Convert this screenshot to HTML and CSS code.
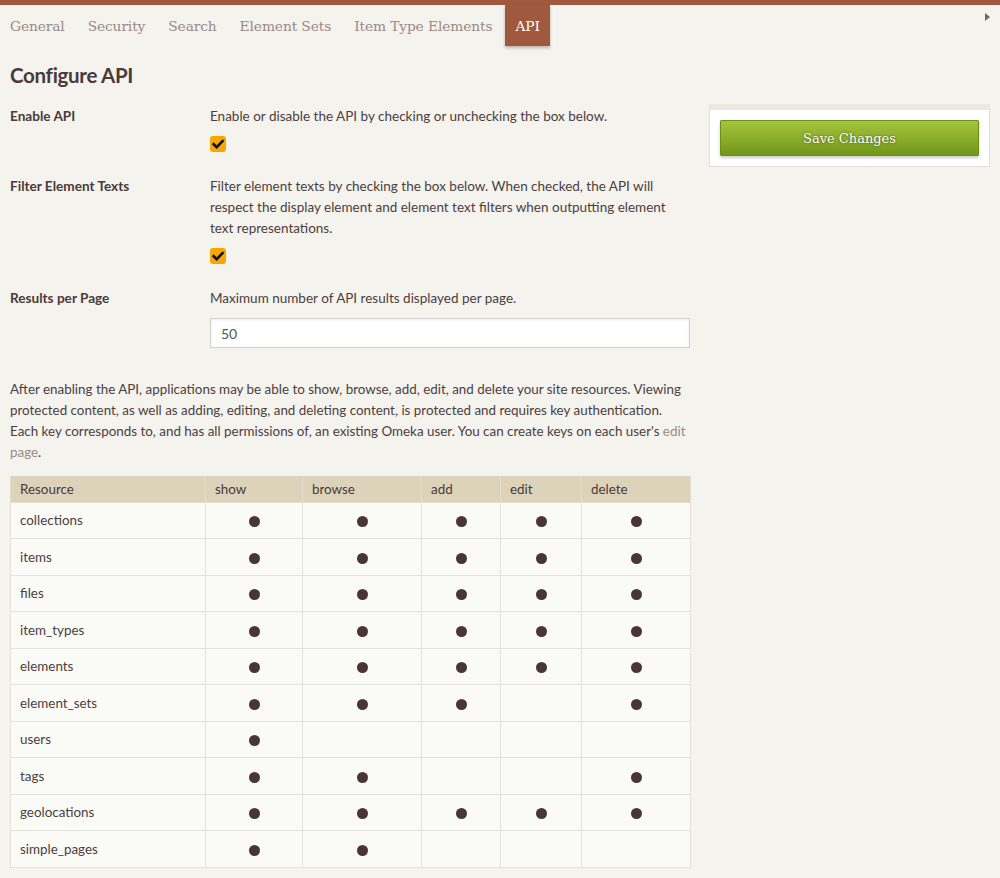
FILE: index.html
```html
<!DOCTYPE html>
<html lang="en">
<head>
<meta charset="utf-8">
<title>Configure API</title>
<link rel="stylesheet" href="styles.css">
</head>
<body>
<div class="topbar"></div>
<nav class="tabs">
  <a class="tab" href="#">General</a>
  <a class="tab" href="#">Security</a>
  <a class="tab" href="#">Search</a>
  <a class="tab" href="#">Element Sets</a>
  <a class="tab" href="#">Item Type Elements</a>
  <a class="tab active" href="#">API</a>
  <span class="more-arrow"></span>
</nav>
<div class="layout">
  <main class="main">
    <h1 class="title">Configure API</h1>
    <div class="field">
      <div class="label">Enable API</div>
      <div class="inputs">
        <p class="explanation">Enable or disable the API by checking or unchecking the box below.</p>
        <span class="checkbox"><svg width="16" height="16" viewBox="0 0 16 16"><rect x="0" y="0" width="16" height="16" rx="3" fill="#f5a800"/><path d="M3.6 8.2 L6.6 11.2 L12.6 5" fill="none" stroke="#111" stroke-width="2.6" stroke-linecap="square"/></svg></span>
      </div>
    </div>
    <div class="field">
      <div class="label">Filter Element Texts</div>
      <div class="inputs">
        <p class="explanation">Filter element texts by checking the box below. When checked, the API will respect the display element and element text filters when outputting element text representations.</p>
        <span class="checkbox"><svg width="16" height="16" viewBox="0 0 16 16"><rect x="0" y="0" width="16" height="16" rx="3" fill="#f5a800"/><path d="M3.6 8.2 L6.6 11.2 L12.6 5" fill="none" stroke="#111" stroke-width="2.6" stroke-linecap="square"/></svg></span>
      </div>
    </div>
    <div class="field">
      <div class="label">Results per Page</div>
      <div class="inputs">
        <p class="explanation">Maximum number of API results displayed per page.</p>
        <input class="textinput" type="text" value="50">
      </div>
    </div>
    <p class="intro">After enabling the API, applications may be able to show, browse, add, edit, and delete your site resources. Viewing protected content, as well as adding, editing, and deleting content, is protected and requires key authentication. Each key corresponds to, and has all permissions of, an existing Omeka user. You can create keys on each user's <a class="link" href="#">edit page</a>.</p>
    <table class="resources">
      <colgroup>
        <col class="c-res"><col class="c-show"><col class="c-browse"><col class="c-add"><col class="c-edit"><col class="c-delete">
      </colgroup>
      <thead>
        <tr><th>Resource</th><th>show</th><th>browse</th><th>add</th><th>edit</th><th>delete</th></tr>
      </thead>
      <tbody>
        <tr><td>collections</td><td class="d"><span class="dot"></span></td><td class="d"><span class="dot"></span></td><td class="d"><span class="dot"></span></td><td class="d"><span class="dot"></span></td><td class="d"><span class="dot"></span></td></tr>
        <tr><td>items</td><td class="d"><span class="dot"></span></td><td class="d"><span class="dot"></span></td><td class="d"><span class="dot"></span></td><td class="d"><span class="dot"></span></td><td class="d"><span class="dot"></span></td></tr>
        <tr><td>files</td><td class="d"><span class="dot"></span></td><td class="d"><span class="dot"></span></td><td class="d"><span class="dot"></span></td><td class="d"><span class="dot"></span></td><td class="d"><span class="dot"></span></td></tr>
        <tr><td>item_types</td><td class="d"><span class="dot"></span></td><td class="d"><span class="dot"></span></td><td class="d"><span class="dot"></span></td><td class="d"><span class="dot"></span></td><td class="d"><span class="dot"></span></td></tr>
        <tr><td>elements</td><td class="d"><span class="dot"></span></td><td class="d"><span class="dot"></span></td><td class="d"><span class="dot"></span></td><td class="d"><span class="dot"></span></td><td class="d"><span class="dot"></span></td></tr>
        <tr><td>element_sets</td><td class="d"><span class="dot"></span></td><td class="d"><span class="dot"></span></td><td class="d"><span class="dot"></span></td><td class="d"></td><td class="d"><span class="dot"></span></td></tr>
        <tr><td>users</td><td class="d"><span class="dot"></span></td><td class="d"></td><td class="d"></td><td class="d"></td><td class="d"></td></tr>
        <tr><td>tags</td><td class="d"><span class="dot"></span></td><td class="d"><span class="dot"></span></td><td class="d"></td><td class="d"></td><td class="d"><span class="dot"></span></td></tr>
        <tr><td>geolocations</td><td class="d"><span class="dot"></span></td><td class="d"><span class="dot"></span></td><td class="d"><span class="dot"></span></td><td class="d"><span class="dot"></span></td><td class="d"><span class="dot"></span></td></tr>
        <tr><td>simple_pages</td><td class="d"><span class="dot"></span></td><td class="d"><span class="dot"></span></td><td class="d"></td><td class="d"></td><td class="d"></td></tr>
      </tbody>
    </table>
  </main>
  <aside class="sidebar">
    <div class="panel">
      <button class="save" type="button">Save Changes</button>
    </div>
  </aside>
</div>
</body>
</html>
```

FILE: styles.css
```css
* { box-sizing: border-box; }

html, body {
  margin: 0;
  padding: 0;
}

body {
  background: #f4f3ee;
  color: #4c3e3e;
  font-family: "Lato", "Open Sans", sans-serif;
  font-size: 13.4px;
  line-height: 21px;
  width: 1000px;
  height: 878px;
  overflow: hidden;
}

.topbar {
  height: 5px;
  background: #a0593f;
}

.tabs {
  display: flex;
  align-items: stretch;
  height: 41px;
  padding-left: 0;
  gap: 3px;
  position: relative;
}

.tab {
  display: flex;
  align-items: center;
  padding: 1px 10px 0;
  font-family: "DejaVu Serif", "Liberation Serif", serif;
  font-size: 13.8px;
  color: #9b8987;
  text-decoration: none;
  letter-spacing: -0.12px;
}

.tab.active {
  background: #a0593f;
  color: #ffffff;
  box-shadow: 0 2px 3px rgba(0, 0, 0, 0.25);
}

.more-arrow {
  position: absolute;
  right: 10px;
  top: 8px;
  width: 0;
  height: 0;
  border-top: 4px solid transparent;
  border-bottom: 4px solid transparent;
  border-left: 5px solid #6a6a6a;
}

.layout {
  display: flex;
  align-items: flex-start;
}

.main {
  width: 680px;
  margin-left: 10px;
}

.title {
  margin: 17px 0 0;
  font-size: 20.5px;
  line-height: 24px;
  font-weight: 700;
  color: #4a3a3a;
  letter-spacing: -0.3px;
}

.field {
  display: grid;
  grid-template-columns: 200px 480px;
  margin-top: 19px;
}

.field + .field {
  margin-top: 24px;
}

.label {
  font-weight: 700;
  font-size: 13.6px;
  color: #4a3a3a;
}

.inputs {
  display: flex;
  flex-direction: column;
  align-items: flex-start;
}

.explanation {
  margin: 0;
  font-size: 13.5px;
}

.checkbox {
  display: block;
  width: 16px;
  height: 16px;
  margin-top: 9px;
}

.checkbox svg {
  display: block;
}

.textinput {
  margin-top: 9px;
  width: 480px;
  height: 30px;
  padding: 0 10px;
  border: 1px solid #d3d1cc;
  background: #ffffff;
  box-shadow: inset 0 1px 3px rgba(0, 0, 0, 0.08);
  font-family: "Lato", "Open Sans", sans-serif;
  font-size: 14px;
  color: #555;
}

.intro {
  margin: 31px 0 0;
}

.link {
  color: #9b8987;
  text-decoration: none;
}

.resources {
  margin-top: 13px;
  width: 680px;
  border-collapse: collapse;
  table-layout: fixed;
}

.c-res { width: 195px; }
.c-show { width: 97px; }
.c-browse { width: 119px; }
.c-add { width: 79px; }
.c-edit { width: 81px; }
.c-delete { width: 109px; }

.resources th {
  background: #ddd3bb;
  text-align: left;
  font-weight: 400;
  padding: 2px 9px 0;
  height: 26px;
  border: 1px solid #e4ddcc;
  border-top: 0;
  color: #4a3a3a;
}

.resources td {
  background: #fafaf7;
  border: 1px solid #e4e2dc;
  padding: 1px 9px 0;
  height: 36.5px;
}

.resources td.d {
  text-align: center;
  padding: 1px 0 0;
}

.dot {
  display: inline-block;
  width: 11px;
  height: 11px;
  border-radius: 50%;
  background: #4a3535;
  vertical-align: middle;
}

.sidebar {
  margin-left: 19px;
  margin-top: 58px;
  width: 281px;
}

.panel {
  background: #ffffff;
  border: 1px solid #e0ded8;
  border-top: 6px solid #ebe8e0;
  padding: 10px 10px 10px;
}

.save {
  display: block;
  width: 100%;
  height: 36px;
  border: 1px solid #6b8f14;
  border-radius: 1px;
  background: linear-gradient(#a6c43c, #70971a);
  box-shadow: 0 2px 3px rgba(0, 0, 0, 0.2);
  color: #ffffff;
  font-family: "DejaVu Serif", "Liberation Serif", serif;
  font-size: 13px;
  text-shadow: 0 0 2px rgba(40, 50, 0, 0.8);
  cursor: pointer;
}
```
